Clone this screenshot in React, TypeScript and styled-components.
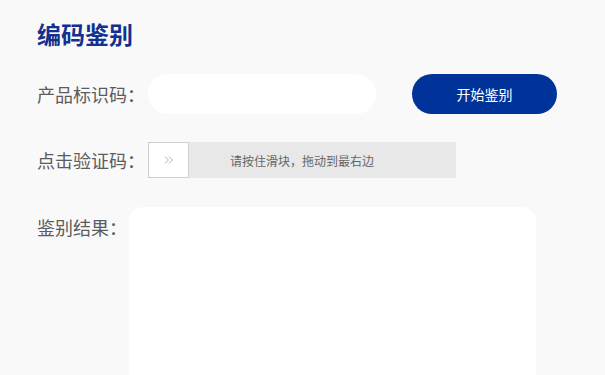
import React from 'react';
import styled, { createGlobalStyle } from 'styled-components';

const GlobalStyle = createGlobalStyle`
  html, body {
    margin: 0;
    padding: 0;
    background: #f9f9f9;
    font-family: "Noto Sans CJK SC", "Noto Sans", sans-serif;
  }
`;

const Page = styled.div`
  padding: 20px 36px 0 37px;
  height: 375px;
  box-sizing: border-box;
  overflow: hidden;
`;

const Title = styled.h1`
  margin: 0;
  font-size: 24px;
  line-height: 28px;
  font-weight: 700;
  color: #13308f;
`;

const Row = styled.div<{ top: number; align?: string }>`
  display: flex;
  align-items: ${props => props.align || 'center'};
  margin-top: ${props => props.top}px;
`;

const Label = styled.span<{ width: number; offset?: number }>`
  width: ${props => props.width}px;
  flex-shrink: 0;
  font-size: 18px;
  line-height: 24px;
  color: #5c5c5c;
  margin-top: ${props => props.offset || 0}px;
`;

const TextInput = styled.input`
  width: 228px;
  height: 40px;
  box-sizing: border-box;
  border: none;
  border-radius: 20px;
  background: #fff;
  outline: none;
  padding: 0 16px;
  font-size: 14px;
`;

const Button = styled.button`
  margin-left: 36px;
  width: 145px;
  height: 40px;
  border: none;
  border-radius: 20px;
  background: #003399;
  color: #fff;
  font-family: inherit;
  font-size: 14px;
  cursor: pointer;
`;

const Slider = styled.div`
  position: relative;
  width: 308px;
  height: 36px;
  background: #e8e8e8;
  display: flex;
  align-items: center;
  justify-content: center;
`;

const Handle = styled.div`
  position: absolute;
  left: 0;
  top: 0;
  width: 41px;
  height: 36px;
  box-sizing: border-box;
  background: #fff;
  border: 1px solid #cfcfcf;
  display: flex;
  align-items: center;
  justify-content: center;
`;

const SliderText = styled.span`
  font-size: 12px;
  color: #666;
`;

const ResultBox = styled.div`
  width: 407px;
  height: 240px;
  background: #fff;
  border-radius: 14px;
`;

const App: React.FC = () => {
  return (
    <Page>
      <GlobalStyle />
      <Title>编码鉴别</Title>
      <Row top={26}>
        <Label width={111}>产品标识码：</Label>
        <TextInput />
        <Button>开始鉴别</Button>
      </Row>
      <Row top={28}>
        <Label width={111}>点击验证码：</Label>
        <Slider>
          <Handle>
            <svg width="10" height="10" viewBox="0 0 10 10" fill="none" stroke="#b0b0b0" strokeWidth="1">
              <path d="M1 1.5 L4.5 5 L1 8.5" />
              <path d="M5 1.5 L8.5 5 L5 8.5" />
            </svg>
          </Handle>
          <SliderText>请按住滑块，拖动到最右边</SliderText>
        </Slider>
      </Row>
      <Row top={29} align="flex-start">
        <Label width={92} offset={8}>鉴别结果：</Label>
        <ResultBox />
      </Row>
    </Page>
  );
};

export default App;
